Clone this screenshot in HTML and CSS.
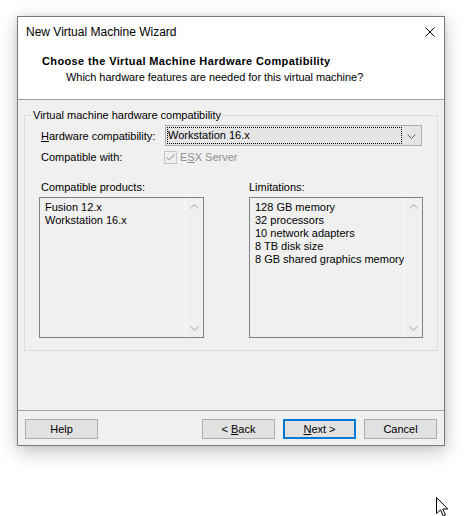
FILE: index.html
```html
<!DOCTYPE html>
<html>
<head>
<meta charset="utf-8">
<link rel="stylesheet" href="styles.css">
</head>
<body>
<div class="window">
  <div class="titlebar">
    <span class="title">New Virtual Machine Wizard</span>
    <svg class="close" width="10" height="10" viewBox="0 0 10 10"><path d="M0.5 0.5 L9.5 9.5 M9.5 0.5 L0.5 9.5" stroke="#000" stroke-width="1" fill="none"/></svg>
  </div>
  <div class="header">
    <div class="heading">Choose the Virtual Machine Hardware Compatibility</div>
    <div class="subheading">Which hardware features are needed for this virtual machine?</div>
  </div>
  <div class="content">
    <fieldset class="group">
      <legend class="legend">Virtual machine hardware compatibility</legend>
      <div class="group-body">
        <div class="row row-combo">
          <span class="label"><u>H</u>ardware compatibility:</span>
          <div class="combo">
            <span class="combo-text">Workstation 16.x</span>
            <span class="combo-arrow"><svg width="9" height="5" viewBox="0 0 9 5"><path d="M0.5 0.5 L4.5 4.5 L8.5 0.5" stroke="#606060" fill="none"/></svg></span>
          </div>
        </div>
        <div class="row row-check">
          <span class="label">Compatible with:</span>
          <span class="checkbox"><svg width="13" height="13" viewBox="0 0 13 13"><rect x="0.5" y="0.5" width="12" height="12" fill="#f0f0f0" stroke="#c6c6c6"/><path d="M2.5 6.5 L5 9 L10.5 3.5" stroke="#b0b0b0" stroke-width="1.2" fill="none"/></svg></span>
          <span class="disabled">E<u>S</u>X Server</span>
        </div>
        <div class="lists">
          <div class="col col-left">
            <div class="col-label">Compatible products:</div>
            <div class="listbox">
              <div class="list-items">
                <div>Fusion 12.x</div>
                <div>Workstation 16.x</div>
              </div>
              <div class="scrollbar">
                <svg width="9" height="5" viewBox="0 0 9 5"><path d="M0.5 4.5 L4.5 0.5 L8.5 4.5" stroke="#c4c4c4" stroke-width="1.4" fill="none"/></svg>
                <svg width="9" height="5" viewBox="0 0 9 5"><path d="M0.5 0.5 L4.5 4.5 L8.5 0.5" stroke="#c4c4c4" stroke-width="1.4" fill="none"/></svg>
              </div>
            </div>
          </div>
          <div class="col col-right">
            <div class="col-label right">Limitations:</div>
            <div class="listbox">
              <div class="list-items">
                <div>128 GB memory</div>
                <div>32 processors</div>
                <div>10 network adapters</div>
                <div>8 TB disk size</div>
                <div>8 GB shared graphics memory</div>
              </div>
              <div class="scrollbar">
                <svg width="9" height="5" viewBox="0 0 9 5"><path d="M0.5 4.5 L4.5 0.5 L8.5 4.5" stroke="#c4c4c4" stroke-width="1.4" fill="none"/></svg>
                <svg width="9" height="5" viewBox="0 0 9 5"><path d="M0.5 0.5 L4.5 4.5 L8.5 0.5" stroke="#c4c4c4" stroke-width="1.4" fill="none"/></svg>
              </div>
            </div>
          </div>
        </div>
      </div>
    </fieldset>
  </div>
  <div class="footer">
    <button class="btn">Help</button>
    <span class="spacer"></span>
    <button class="btn">&lt; <u>B</u>ack</button>
    <button class="btn btn-default"><u>N</u>ext &gt;</button>
    <button class="btn">Cancel</button>
  </div>
</div>
<svg class="cursor" width="13" height="20" viewBox="0 0 13 20"><path d="M0.5 0.5 L0.5 16.5 L4.5 12.8 L7.2 19 L9.4 18 L6.8 12 L11.8 12 Z" fill="#fff" stroke="#000" stroke-width="1" stroke-linejoin="miter"/></svg>
</body>
</html>
```
FILE: styles.css
```css
* { box-sizing: border-box; }
html, body { margin: 0; padding: 0; background: #fff; }
body {
  font-family: "Liberation Sans", Arial, sans-serif;
  font-size: 11px;
  color: #000;
  width: 466px;
  height: 516px;
  overflow: hidden;
  padding-top: 16px;
  padding-left: 17px;
  position: relative;
}
.window {
  width: 428px;
  height: 430px;
  border: 1px solid #7a7a7a;
  background: #fff;
  box-shadow: 0 6px 18px rgba(0,0,0,0.22), 0 0 6px rgba(0,0,0,0.10);
  display: flex;
  flex-direction: column;
}
.titlebar {
  height: 30px;
  display: flex;
  align-items: center;
  padding: 0 9px 0 8px;
  background: #fff;
}
.title { font-size: 12px; flex: 1; }
.close { display: block; }
.header {
  height: 53px;
  padding: 6px 0 0 24px;
  border-bottom: 1px solid #a0a0a0;
  background: #fff;
}
.heading { font-weight: bold; line-height: 16px; letter-spacing: 0.38px; }
.subheading { line-height: 16px; padding-left: 24px; letter-spacing: -0.05px; }
.content {
  height: 310px;
  background: #f0f0f0;
  padding: 8px 6px 0 6px;
}
.group {
  margin: 0;
  padding: 0;
  border: 1px solid #dcdcdc;
  min-width: 0;
}
.legend {
  margin-left: 6px;
  padding: 0 2px;
  line-height: 14px;
}
.group-body { padding: 0 0 12px 14px; }
.row { display: flex; align-items: center; }
.row-combo { margin-top: 3px; height: 21px; }
.row-check { margin-top: 3px; height: 16px; }
.label { width: 124px; margin-left: 2px; flex: none; }
.combo {
  width: 257px;
  height: 21px;
  border: 1px solid #adadad;
  background: #e5e5e5;
  display: flex;
  padding: 1px 0 1px 1px;
}
.combo-text {
  width: 235px;
  height: 17px;
  border: 1px dotted #000;
  line-height: 15px;
  padding-left: 0;
}
.combo-arrow {
  flex: 1;
  display: flex;
  align-items: center;
  justify-content: center;
  padding-top: 1px;
}
.combo-arrow svg { display: block; }
.checkbox { margin-left: -1px; width: 13px; height: 13px; }
.checkbox svg { display: block; }
.disabled { color: #8d8d8d; margin-left: 3px; }
.lists { display: flex; margin-top: 15px; gap: 45px; }
.col-left { width: 165px; }
.col-right { width: 174px; }
.col-label { line-height: 14px; margin-left: 2px; }
.col-label.right { margin-left: 0; }
.listbox {
  margin-top: 3px;
  height: 141px;
  border: 1px solid #828282;
  background: #f0f0f0;
  display: flex;
}
.list-items {
  flex: 1;
  padding: 3px 0 0 5px;
  line-height: 13px;
  white-space: nowrap;
}
.scrollbar {
  width: 18px;
  border-left: 1px solid #fafafa;
  display: flex;
  flex-direction: column;
  justify-content: space-between;
  align-items: center;
  padding: 6px 0 6px 0;
}
.scrollbar svg { display: block; }
.footer {
  height: 35px;
  border-top: 1px solid #a0a0a0;
  background: #f0f0f0;
  display: flex;
  align-items: flex-start;
  padding: 8px 7px 0 7px;
  gap: 8px;
}
.spacer { flex: 1; }
.btn {
  width: 73px;
  height: 20px;
  margin: 0;
  padding: 0;
  border: 1px solid #adadad;
  background: #e1e1e1;
  font-family: "Liberation Sans", Arial, sans-serif;
  font-size: 11px;
  color: #000;
  line-height: 18px;
  text-align: center;
}
.btn-default { border: 2px solid #0078d7; line-height: 16px; }
.cursor { position: absolute; left: 436px; top: 497px; }
```
